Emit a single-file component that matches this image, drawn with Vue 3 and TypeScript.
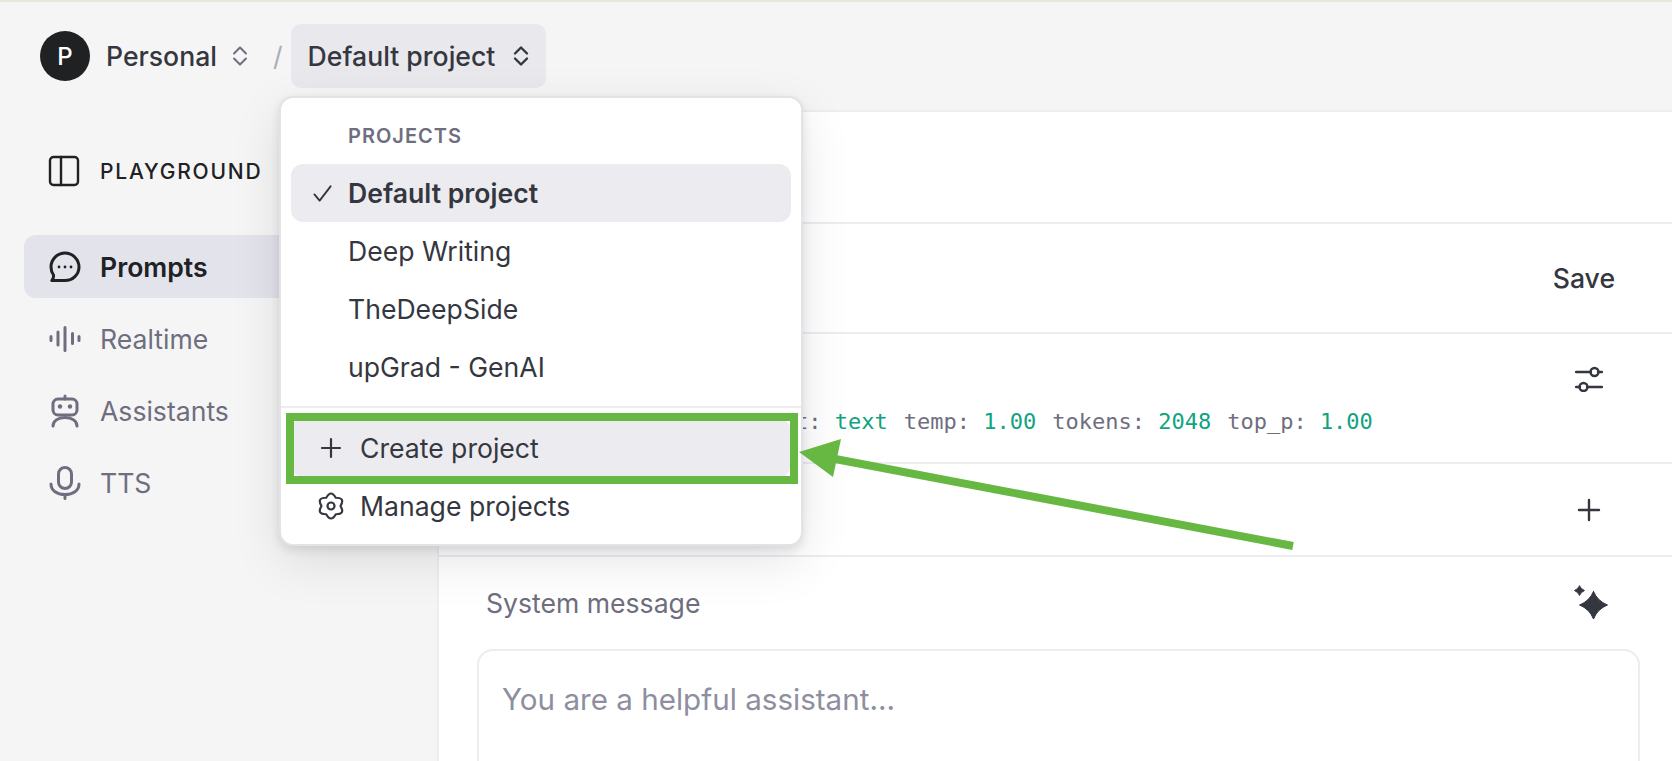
<script setup lang="ts">
const navItems = [
  { label: "Realtime", icon: "wave" },
  { label: "Assistants", icon: "bot" },
  { label: "TTS", icon: "mic" },
];
const projects = ["Deep Writing", "TheDeepSide", "upGrad - GenAI"];
</script>

<template>
  <div class="page">
    <header class="topbar">
      <span class="avatar">P</span>
      <span class="org">Personal</span>
      <svg class="updown muted" viewBox="0 0 16 24"><path d="M2 9.500 8 3.500l6 6M2 14.500l6 6 6-6" /></svg>
      <span class="slash">/</span>
      <button class="project-btn">
        Default project
        <svg class="updown" viewBox="0 0 16 24"><path d="M2 9.500 8 3.500l6 6M2 14.500l6 6 6-6" /></svg>
      </button>
    </header>

    <div class="body">
      <aside class="sidebar">
        <div class="side-head">
          <svg class="panel-icon" viewBox="0 0 32 32"><rect x="2" y="2" width="28" height="28" rx="3.500" /><path d="M13 2v28" /></svg>
          <span>PLAYGROUND</span>
        </div>
        <div class="nav-item active">
          <svg class="nav-icon" viewBox="0 0 34 34">
            <path d="M17 3C9.300 3 3 9.200 3 17c0 3 .9 5.700 2.500 8 .3 1.500-.5 3.800-1.700 5.500H17c7.700 0 14-6 14-13.500S24.700 3 17 3Z" />
            <circle class="dot" cx="11" cy="17" r="1.400" /><circle class="dot" cx="17" cy="17" r="1.400" /><circle class="dot" cx="23" cy="17" r="1.400" />
          </svg>
          Prompts
        </div>
        <div v-for="item in navItems" :key="item.label" class="nav-item">
          <svg class="nav-icon" viewBox="0 0 34 34">
            <path v-if="item.icon === 'wave'" d="M3 14.500v4M10 10v13M17 5.500v23M24.500 11.500v10M31 14.500v4" />
            <template v-else-if="item.icon === 'bot'">
              <rect x="5" y="5" width="24" height="16" rx="5" />
              <path d="M17 2v3M5 32c0-5 5-8.500 12-8.500S29 27 29 32" />
              <circle class="dot" cx="12" cy="12.500" r="2.200" /><circle class="dot" cx="22" cy="12.500" r="2.200" />
            </template>
            <template v-else>
              <rect x="10.500" y="1.500" width="13" height="21" rx="6.500" />
              <path d="M3 18c0 6.500 6 10.500 14 10.500S31 24.500 31 18M17 28.500v4" />
            </template>
          </svg>
          {{ item.label }}
        </div>
      </aside>

      <main class="panel">
        <div class="row row-top"></div>
        <div class="row row-save"><span class="save">Save</span></div>
        <div class="row row-model">
          <svg class="act-icon" viewBox="0 0 28 28">
            <path d="M1 8h15M23 8h4M1 23h4M12 23h15" />
            <circle cx="19.500" cy="8" r="4" /><circle cx="8.500" cy="23" r="4" />
          </svg>
          <div class="params">
            <span>t: <b>text</b></span>
            <span>temp: <b>1.00</b></span>
            <span>tokens: <b>2048</b></span>
            <span>top_p: <b>1.00</b></span>
          </div>
        </div>
        <div class="row row-plus">
          <svg class="act-icon plus" viewBox="0 0 28 28"><path d="M14 4v20M4 14h20" /></svg>
        </div>
        <div class="system-head">
          <span>System message</span>
          <svg class="sparkle" viewBox="0 0 36 36">
            <path d="M20.500 6.500Q24.500 16 34.500 20 24.500 24 20.500 34 16.500 24 6.500 20 16.500 16 20.500 6.500Z" />
            <path d="M6.500 1Q8 4 11.500 5.500 8 7 6.500 10.500 5 7 1.500 5.500 5 4 6.500 1Z" />
          </svg>
        </div>
        <div class="system-box">You are a helpful assistant...</div>
      </main>
    </div>

    <div class="menu">
      <div class="menu-label">PROJECTS</div>
      <div class="menu-item current">
        <svg class="check" viewBox="0 0 20 20"><path d="M1.500 11 7 17.500 18.500 2.500" /></svg>
        Default project
      </div>
      <div v-for="name in projects" :key="name" class="menu-item">{{ name }}</div>
      <div class="menu-sep"></div>
      <div class="menu-action hovered">
        <svg class="action-icon" viewBox="0 0 28 28"><path d="M14 5v18M5 14h18" /></svg>
        Create project
      </div>
      <div class="menu-action">
        <svg class="action-icon" viewBox="0 0 28 28">
          <path d="M18.750 5.770Q14 -2.800 9.250 5.770 -.550 5.600 4.500 14 -.550 22.400 9.250 22.230 14 30.800 18.750 22.230 28.550 22.400 23.500 14 28.550 5.600 18.750 5.770Z" />
          <circle cx="14" cy="14" r="3.500" />
        </svg>
        Manage projects
      </div>
    </div>

    <div class="callout"></div>
    <svg class="arrow" viewBox="0 0 1672 761">
      <path class="arrow-line" d="M1293 546 830 458" />
      <path class="arrow-head" d="M799 452 841 439 833 477Z" />
    </svg>
  </div>
</template>

<style>
html,
body {
  margin: 0;
  background: #f5f5f5;
}
</style>

<style scoped>
.page {
  position: relative;
  height: 761px;
  box-sizing: border-box;
  overflow: hidden;
  border-top: 2px solid #e6e8dc;
  background: #f5f5f5;
  color: #353740;
  font-family: Inter, "Noto Sans", sans-serif;
  font-size: 26.6px;
}

svg {
  fill: none;
  stroke: currentColor;
  stroke-width: 2.4;
  stroke-linecap: round;
  stroke-linejoin: round;
  flex: none;
}

/* top bar */
.topbar {
  display: flex;
  align-items: center;
  height: 108px;
  box-sizing: border-box;
  padding-left: 40px;
}

.avatar {
  display: flex;
  align-items: center;
  justify-content: center;
  width: 50px;
  height: 50px;
  border-radius: 50%;
  background: #202123;
  color: #fff;
  font-size: 24px;
  font-weight: 500;
  margin-right: 16px;
}

.org {
  font-weight: 500;
  width: 126px;
}

.updown {
  width: 16px;
  height: 24px;
  stroke-width: 2.4;
}

.updown.muted {
  color: #6e6e80;
  stroke-width: 2;
}

.slash {
  color: #acacbe;
  margin: 0 8px 0 25px;
}

.project-btn {
  display: flex;
  align-items: center;
  height: 64px;
  width: 255px;
  box-sizing: border-box;
  margin: 0;
  padding: 0 0 0 17px;
  gap: 18px;
  border: 0;
  border-radius: 10px;
  background: #e8e8ed;
  color: #353740;
  font: inherit;
  font-weight: 500;
}

/* sidebar */
.body {
  display: flex;
  height: 651px;
}

.sidebar {
  width: 437px;
  flex: none;
  box-sizing: border-box;
  padding: 41px 22px 0 24px;
}

.side-head {
  display: flex;
  align-items: center;
  gap: 20px;
  height: 40px;
  margin-bottom: 44px;
  padding-left: 24px;
  color: #202123;
  font-size: 21px;
  font-weight: 500;
  letter-spacing: 1.800px;
}

.panel-icon {
  width: 32px;
  height: 32px;
}

.nav-item {
  display: flex;
  align-items: center;
  gap: 18px;
  height: 63px;
  margin-bottom: 9px;
  padding-left: 24px;
  border-radius: 12px;
  color: #6e6e80;
}

.nav-item.active {
  background: #e2e3eb;
  color: #202123;
  font-weight: 600;
}

.nav-icon {
  width: 34px;
  height: 34px;
  stroke-width: 3;
}

.dot {
  fill: currentColor;
  stroke: none;
}

/* main panel */
.panel {
  flex: 1;
  min-width: 0;
  background: #fff;
  border-left: 2px solid #ececf1;
  border-top: 2px solid #ececf1;
}

.row {
  display: flex;
  box-sizing: border-box;
  border-bottom: 2px solid #ececf1;
}

.row-top {
  height: 112px;
}

.row-save {
  height: 110px;
  align-items: center;
  justify-content: flex-end;
  padding-right: 57px;
}

.save {
  font-weight: 500;
}

.row-model {
  height: 130px;
  flex-direction: column;
  padding-top: 30px;
}

.act-icon {
  width: 28px;
  height: 28px;
  align-self: flex-end;
  margin-right: 69px;
}

.act-icon.plus {
  align-self: center;
}

.params {
  display: flex;
  gap: 16px;
  margin-top: 15px;
  padding-left: 356px;
  color: #6e6e80;
  font-family: "DejaVu Sans Mono", monospace;
  font-size: 22px;
  line-height: 30px;
  white-space: pre;
}

.params b {
  color: #10a37f;
  font-weight: 400;
}

.row-plus {
  height: 93px;
  justify-content: flex-end;
}

.system-head {
  display: flex;
  align-items: center;
  justify-content: space-between;
  height: 92px;
  padding: 0 63px 0 47px;
  color: #6e6e80;
}

.sparkle {
  width: 36px;
  height: 36px;
  fill: #353740;
  stroke: #353740;
  stroke-width: 1;
}

.system-box {
  height: 200px;
  margin: 0 32px 0 38px;
  padding: 30px 23px;
  border: 2px solid #ececf1;
  border-radius: 16px;
  color: #8e8ea0;
  font-size: 29.600px;
}

/* project dropdown */
.menu {
  position: absolute;
  left: 279px;
  top: 94px;
  width: 524px;
  height: 450px;
  box-sizing: border-box;
  padding: 0 10px;
  background: #fff;
  border: 2px solid #e2e2e8;
  border-radius: 14px;
  box-shadow: 0 4px 10px rgba(0, 0, 0, 0.1), 0 16px 50px rgba(0, 0, 0, 0.1);
}

.menu-label {
  padding: 24px 0 14px 57px;
  color: #6e6e80;
  font-size: 20px;
  font-weight: 600;
  line-height: 28px;
  letter-spacing: 1px;
}

.menu-item {
  display: flex;
  align-items: center;
  height: 58px;
  padding-left: 57px;
  border-radius: 12px;
}

.menu-item.current {
  position: relative;
  background: #ecebf0;
  font-weight: 600;
}

.check {
  position: absolute;
  left: 22px;
  width: 19px;
  height: 19px;
  stroke-width: 2;
}

.menu-sep {
  height: 2px;
  margin: 10px -10px 11px;
  background: #ececf1;
}

.menu-action {
  display: flex;
  align-items: center;
  gap: 15px;
  height: 58px;
  padding-left: 26px;
  border-radius: 12px;
}

.menu-action.hovered {
  background: #ecebf0;
}

.action-icon {
  width: 28px;
  height: 28px;
  stroke-width: 2.200;
}

/* annotation drawn over the screenshot */
.callout {
  position: absolute;
  left: 286px;
  top: 411px;
  width: 512px;
  height: 71px;
  box-sizing: border-box;
  border: 8px solid #66b843;
}

.arrow {
  position: absolute;
  left: 0;
  top: -2px;
  width: 1672px;
  height: 761px;
  pointer-events: none;
}

.arrow-line {
  stroke: #66b843;
  stroke-width: 8;
  stroke-linecap: butt;
}

.arrow-head {
  fill: #66b843;
  stroke: none;
}
</style>
